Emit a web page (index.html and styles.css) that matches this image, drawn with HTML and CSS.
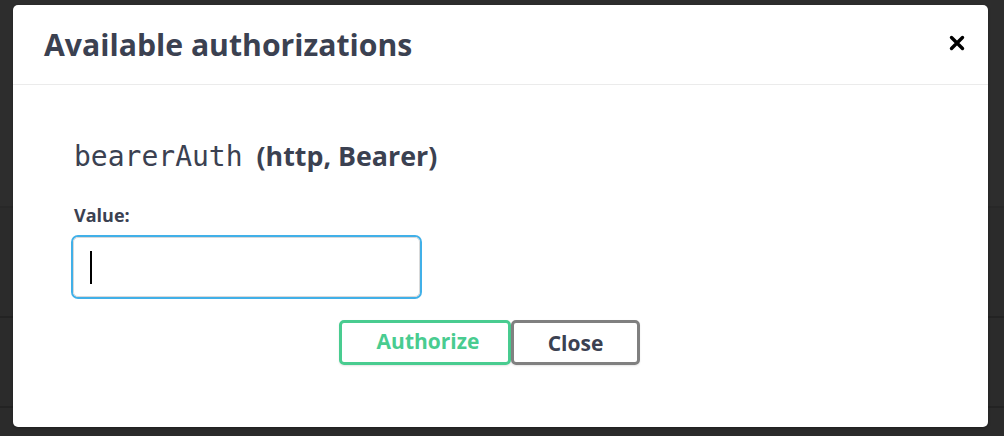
FILE: index.html
```html
<!DOCTYPE html>
<html lang="en">
<head>
<meta charset="utf-8">
<title>Available authorizations</title>
<link rel="stylesheet" href="styles.css">
</head>
<body>
<div class="modal">
  <div class="modal-header">
    <h3 class="modal-title">Available authorizations</h3>
    <button class="close-x" aria-label="Close">
      <svg width="16" height="16" viewBox="0 0 16 16"><path d="M2.5 2.5 L13.5 13.5 M13.5 2.5 L2.5 13.5" stroke="#000" stroke-width="3.4" stroke-linecap="round" fill="none"/></svg>
    </button>
  </div>
  <div class="modal-content">
    <h4 class="scheme"><code class="scheme-name">bearerAuth</code>&nbsp; (http, Bearer)</h4>
    <label class="field-label">Value:</label>
    <div class="input"><span class="caret"></span></div>
    <div class="btn-wrapper">
      <button class="btn btn-authorize">Authorize</button>
      <button class="btn btn-close">Close</button>
    </div>
  </div>
</div>
</body>
</html>
```
FILE: styles.css
```css
html, body {
  margin: 0;
  padding: 0;
}
body {
  width: 1004px;
  height: 436px;
  overflow: hidden;
  background: linear-gradient(to bottom,
    #2d2d2d 0, #2d2d2d 206px,
    #282828 206px, #282828 208px,
    #2b2b2b 208px, #2b2b2b 316px,
    #232323 316px, #232323 318px,
    #2b2b2b 318px, #2b2b2b 406px,
    #232323 406px, #232323 408px,
    #2b2b2b 408px);
  font-family: "Open Sans", "Noto Sans", sans-serif;
  color: #3b4151;
  padding: 5px 0 0 13px;
  box-sizing: border-box;
}
.modal {
  width: 975px;
  height: 422px;
  background: #fff;
  border-radius: 5px;
  box-shadow: 0 1px 3px rgba(0,0,0,0.3);
  overflow: hidden;
}
.modal-header {
  height: 79px;
  border-bottom: 1px solid #ebebeb;
  display: flex;
  align-items: center;
  justify-content: space-between;
  padding: 0 23px 0 31px;
}
.modal-title {
  margin: 0;
  font-size: 30.2px;
  font-weight: 700;
  color: #3b4151;
}
.close-x {
  border: 0;
  background: none;
  padding: 0;
  width: 16px;
  height: 16px;
  display: flex;
  margin-bottom: 3px;
}
.modal-content {
  padding: 51px 61px 0;
}
.scheme {
  margin: 0 0 26px;
  font-size: 26.8px;
  line-height: 40px;
  font-weight: 700;
  color: #3b4151;
}
.scheme-name {
  font-family: "DejaVu Sans Mono", monospace;
  font-weight: 400;
  font-size: 28px;
}
.field-label {
  display: block;
  font-size: 18px;
  font-weight: 700;
  line-height: 24px;
  margin-bottom: 10px;
}
.input {
  width: 329px;
  height: 58px;
  margin-left: -1px;
  border: 1px solid #d9d9d9;
  border-radius: 5px;
  box-shadow: 0 0 0 2px #41b0e8;
  display: flex;
  align-items: center;
  padding-left: 16px;
}
.caret {
  width: 2px;
  height: 33px;
  background: #000;
}
.btn-wrapper {
  display: flex;
  justify-content: center;
  margin-top: 23px;
  margin-left: -61px;
  margin-right: -61px;
}
.btn {
  font-family: "Open Sans", "Noto Sans", sans-serif;
  font-size: 21px;
  font-weight: 700;
  height: 45px;
  background: transparent;
  border-radius: 5px;
  border: 3px solid;
  box-shadow: 0 1px 2px rgba(0,0,0,0.1);
  padding: 0;
}
.btn-authorize {
  width: 172px;
  border-color: #49cc90;
  color: #49cc90;
  padding-bottom: 3px;
  padding-left: 6px;
}
.btn-close {
  width: 129px;
  border-color: #808080;
  color: #3b4151;
  margin-right: 22px;
}
```
